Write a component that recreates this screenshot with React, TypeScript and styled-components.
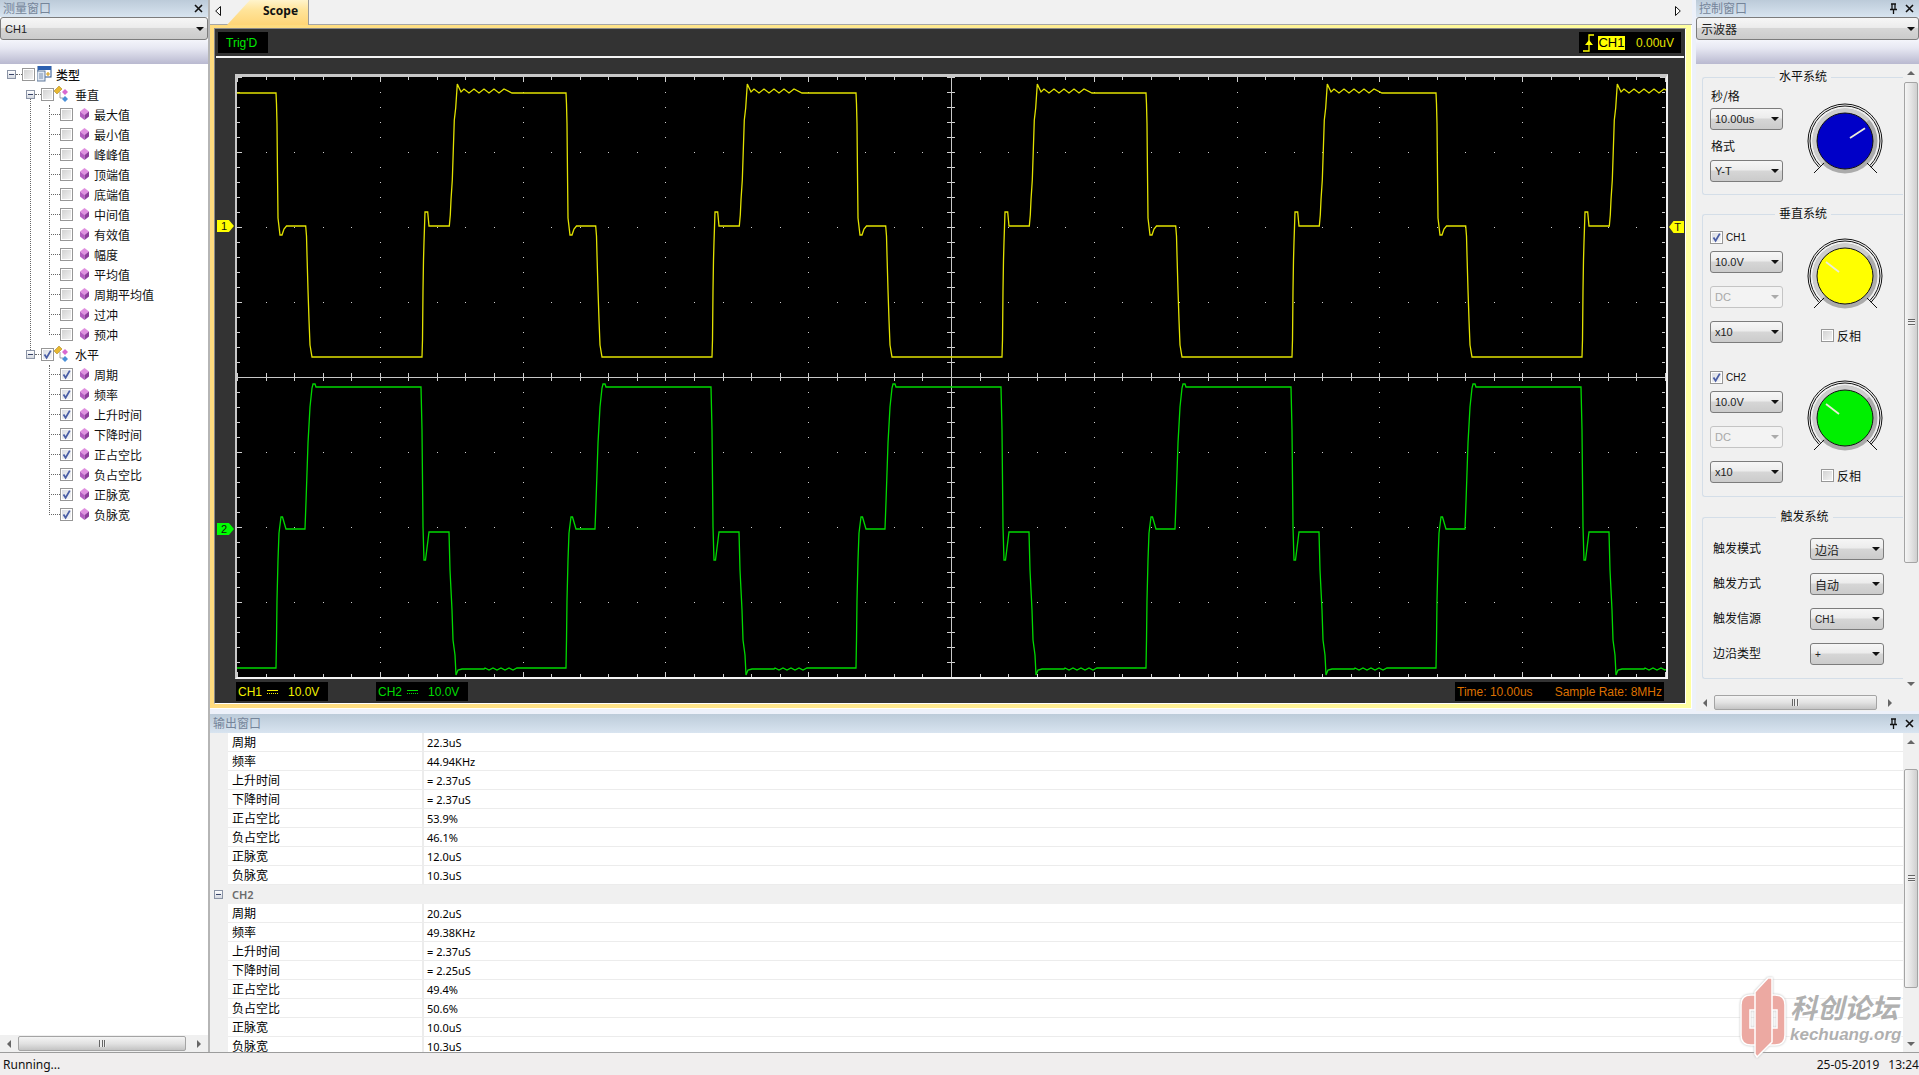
import styled, { createGlobalStyle } from 'styled-components'

const CJK = `'Noto Sans CJK SC', 'Noto Sans', sans-serif`
const LATIN = `'Liberation Sans', Arial, sans-serif`
const UI = `'Noto Sans', 'Noto Sans CJK SC', sans-serif`

const GlobalStyle = createGlobalStyle`
  html, body {
    margin: 0;
    padding: 0;
    background: #fff;
    overflow: hidden;
  }
  * {
    box-sizing: border-box;
  }
`

const Root = styled.div`
  position: relative;
  width: 1919px;
  height: 1075px;
  overflow: hidden;
  display: flex;
  flex-direction: column;
  font-family: ${CJK};
  font-size: 12px;
  color: #111;
`

const Main = styled.div`
  display: flex;
  height: 1052px;
`

/* docking pane parts */

const Pane = styled.div`
  width: 210px;
  display: flex;
  flex-direction: column;
  border-right: 2px solid #b5b5b5;
`

const TitleBar = styled.div`
  height: 17px;
  flex: none;
  display: flex;
  align-items: center;
  gap: 7px;
  padding: 0 5px 0 3px;
  background: linear-gradient(#bccbd9, #d8e4f0);
  color: #75859a;
  font-size: 12px;
`

const TitleText = styled.span`
  flex: 1;
  line-height: 15px;
  padding-bottom: 2px;
`

const ComboBar = styled.div`
  height: 23px;
  flex: none;
`

const Combo = styled.div<{ $w?: number; $h?: number; $disabled?: boolean; $size?: number; $cjk?: boolean }>`
  width: ${(p) => (p.$w ? `${p.$w}px` : '100%')};
  height: ${(p) => p.$h ?? 22}px;
  flex: none;
  display: flex;
  align-items: center;
  justify-content: space-between;
  padding: 0 3px 0 4px;
  border: 1px solid ${(p) => (p.$disabled ? '#c4c4c4' : '#7c7c7c')};
  border-radius: 3px;
  background: ${(p) =>
    p.$disabled
      ? '#f3f3f3'
      : 'linear-gradient(#f6f6f6 0%, #ececec 45%, #d6d6d6 50%, #cbcbcb 100%)'};
  color: ${(p) => (p.$disabled ? '#a8a8a8' : '#222')};
  font-family: ${(p) => (p.$cjk ? CJK : LATIN)};
  font-size: ${(p) => p.$size ?? 11}px;
`

const Caret = styled.i<{ $disabled?: boolean }>`
  width: 0;
  height: 0;
  border-left: 4px solid transparent;
  border-right: 4px solid transparent;
  border-top: 4px solid ${(p) => (p.$disabled ? '#aaa' : '#111')};
`

const ToolStrip = styled.div`
  height: 24px;
  flex: none;
  background: linear-gradient(#f4f5fb, #e6e7f2 35%, #b9b9d0);
`

const TreeArea = styled.div`
  position: relative;
  flex: 1;
  background: #fff;
`

const Row = styled.div<{ $level: number; $conn: number; $connW: number }>`
  position: relative;
  height: 20px;
  display: flex;
  align-items: center;
  padding-left: ${(p) => [7, 26, 60][p.$level]}px;
  &::before {
    content: '';
    position: absolute;
    left: ${(p) => p.$conn}px;
    width: ${(p) => p.$connW}px;
    top: 10px;
    border-top: 1px dotted #666;
  }
`

const Expand = styled.span`
  position: relative;
  width: 9px;
  height: 9px;
  margin-right: 6px;
  flex: none;
  border: 1px solid #8a93a5;
  background: linear-gradient(#fff, #d4d8e0);
  &::after {
    content: '';
    position: absolute;
    left: 1px;
    right: 1px;
    top: 3px;
    height: 1px;
    background: #39456a;
  }
`

const Check = styled.span<{ $on?: boolean }>`
  width: 13px;
  height: 13px;
  flex: none;
  display: flex;
  align-items: center;
  justify-content: center;
  border: 1px solid #979797;
  background: ${(p) =>
    p.$on ? 'linear-gradient(135deg, #d8dbe2, #f8f8f8)' : 'linear-gradient(135deg, #cfcfcf, #f6f6f6)'};
  box-shadow: inset 0 0 0 1px #fff;
`

const IconSlot = styled.span<{ $ml: number; $w: number }>`
  width: ${(p) => p.$w}px;
  height: 16px;
  margin-left: ${(p) => p.$ml}px;
  flex: none;
  display: flex;
  align-items: center;
  justify-content: center;
`

const Label = styled.span<{ $ml: number; $bold?: boolean }>`
  margin-left: ${(p) => p.$ml}px;
  font-weight: ${(p) => (p.$bold ? 500 : 400)};
  white-space: nowrap;
`

const Guide = styled.i<{ $left: number; $top: number; $h: number }>`
  position: absolute;
  left: ${(p) => p.$left}px;
  top: ${(p) => p.$top}px;
  height: ${(p) => p.$h}px;
  border-left: 1px dotted #666;
`

/* scrollbars */

const HBar = styled.div`
  height: 17px;
  flex: none;
  display: flex;
  align-items: center;
  background: #f0f0f0;
`

const BarEnd = styled.span<{ $w: number; $pl?: number }>`
  width: ${(p) => p.$w}px;
  height: 100%;
  flex: none;
  padding-left: ${(p) => p.$pl ?? 0}px;
  display: flex;
  align-items: center;
  justify-content: center;
`

const Thumb = styled.div<{ $vertical?: boolean }>`
  flex: 1;
  height: ${(p) => (p.$vertical ? 'auto' : '15px')};
  display: flex;
  align-items: center;
  justify-content: center;
  border: 1px solid #a4a4a4;
  border-radius: 2px;
  background: ${(p) =>
    p.$vertical
      ? 'linear-gradient(90deg, #f5f5f5, #e4e4e4 50%, #cfcfcf)'
      : 'linear-gradient(#f4f4f4, #e2e2e2 50%, #c4c4c4)'};
`

const Grip = styled.i<{ $vertical?: boolean }>`
  width: 7px;
  height: 7px;
  background: ${(p) =>
    p.$vertical
      ? 'repeating-linear-gradient(#666 0 1px, #eee 1px 2.5px)'
      : 'repeating-linear-gradient(90deg, #666 0 1px, #eee 1px 2.5px)'};
`

const Tri = styled.i<{ $dir: 'left' | 'right' | 'up' | 'down' }>`
  width: 0;
  height: 0;
  ${(p) =>
    p.$dir === 'left' || p.$dir === 'right'
      ? `border-top: 4px solid transparent; border-bottom: 4px solid transparent;
         border-${p.$dir === 'left' ? 'right' : 'left'}: 4px solid #666;`
      : `border-left: 4px solid transparent; border-right: 4px solid transparent;
         border-${p.$dir === 'up' ? 'bottom' : 'top'}: 4px solid #666;`}
`

const VBar = styled.div`
  width: 16px;
  flex: none;
  display: flex;
  flex-direction: column;
  background: #f0f0f0;
`

const VEnd = styled.span<{ $h: number }>`
  height: ${(p) => p.$h}px;
  flex: none;
  display: flex;
  align-items: center;
  justify-content: center;
`

const VThumb = styled(Thumb)<{ $h: number }>`
  flex: none;
  height: ${(p) => p.$h}px;
  margin: 0 1px;
`

const VSpace = styled.span`
  flex: 1;
`

/* center column */

const Work = styled.div`
  flex: 1;
  display: flex;
  flex-direction: column;
  min-width: 0;
`

const TopRow = styled.div`
  height: 714px;
  flex: none;
  display: flex;
  background: #edf1fa;
`

const DocArea = styled.div`
  width: 1482px;
  flex: none;
`

const TabStrip = styled.div`
  height: 25px;
  display: flex;
  align-items: flex-start;
  padding: 0 11px 0 5px;
  background: #f1f1f1;
  border-bottom: 1px solid #a6a6a6;
`

const TabArrow = styled.svg`
  width: 6px;
  height: 10px;
  margin-top: 6px;
  flex: none;
`

const Tab = styled.div`
  width: 82px;
  height: 25px;
  margin-left: 6px;
  padding-left: 36px;
  margin-right: auto;
  clip-path: polygon(0 100%, 23px 0, 100% 0, 100% 100%);
  background: linear-gradient(#fff4cc, #ffe49a 40%, #ffd577);
  border-right: 1px solid #9a9a9a;
  font-family: ${UI};
  font-weight: 700;
  font-size: 12px;
  line-height: 22px;
`

const Frame = styled.div`
  height: 684px;
  padding: 3px 5px 5px 4px;
  background: linear-gradient(90deg, #ffdb7e, #ffea90 50%, #ffff9f);
  border-right: 1px solid #fff;
  border-bottom: 1px solid #fff;
`

const Scopeboard = styled.div`
  position: relative;
  height: 676px;
  background: #333;
  border: 1px solid;
  border-color: #8a8a8a #fff #fff #8a8a8a;
  font-family: ${LATIN};
  font-size: 12px;
`

const Header = styled.div`
  height: 21px;
  margin-top: 3px;
  padding: 0 4px 0 3px;
  display: flex;
  justify-content: space-between;
`

const Readout = styled.div<{ $w: number; $color?: string }>`
  width: ${(p) => p.$w}px;
  height: 100%;
  display: flex;
  align-items: center;
  background: #000;
  color: ${(p) => p.$color ?? '#00e800'};
  white-space: nowrap;
`

const TrigText = styled.span`
  padding-left: 8px;
`

const TrigSymbol = styled.svg`
  width: 12px;
  height: 19px;
  margin-left: 3px;
  flex: none;
`

const ChTag = styled.span`
  width: 27px;
  height: 14px;
  margin-left: 4px;
  background: #ffff00;
  color: #000;
  font-size: 13px;
  line-height: 14px;
  text-align: center;
`

const ChLevel = styled.span`
  margin-left: 11px;
  color: #e4e400;
`

const WhiteRule = styled.div`
  height: 2px;
  margin: 3px 1px 0;
  background: #f4f4f4;
`

const Screen = styled.div`
  width: 1433px;
  height: 605px;
  margin: 16px 0 0 20px;
  border: solid #e8e8e8;
  border-width: 3px 2px 2px 2px;
  border-color: #c8c8c8 #f0f0f0 #f4f4f4 #c8c8c8;
  background: #000;
`

const ScopeSvg = styled.svg`
  display: block;
  width: 100%;
  height: 100%;
`

const Footer = styled.div`
  height: 19px;
  margin: 3px 21px 0;
  display: flex;
  gap: 48px;
`

const FooterText = styled.span<{ $ml?: number }>`
  margin-left: ${(p) => p.$ml ?? 2}px;
`

const DcMark = styled.i`
  width: 11px;
  height: 4px;
  margin-left: 5px;
  border-top: 1px solid currentColor;
  border-bottom: 1px dotted currentColor;
  flex: none;
`

const RateBox = styled(Readout)`
  margin-left: auto;
  justify-content: space-between;
  padding: 0 2px;
`

const Marker = styled.div<{ $top: number; $side: 'left' | 'right'; $color: string }>`
  position: absolute;
  top: ${(p) => p.$top}px;
  ${(p) => (p.$side === 'left' ? 'left: 2px;' : 'right: 1px;')}
  width: ${(p) => (p.$side === 'left' ? 17 : 15)}px;
  height: 12px;
  background: ${(p) => p.$color};
  clip-path: ${(p) =>
    p.$side === 'left'
      ? 'polygon(0 0, 70% 0, 100% 50%, 70% 100%, 0 100%)'
      : 'polygon(30% 0, 100% 0, 100% 100%, 30% 100%, 0 50%)'};
  color: #111;
  font-size: 11px;
  line-height: 12px;
  text-align: ${(p) => (p.$side === 'left' ? 'left' : 'right')};
  padding: 0 3px 0 4px;
`

/* control pane */

const ControlPane = styled.div`
  width: 223px;
  margin-left: 4px;
  flex: none;
  display: flex;
  flex-direction: column;
`

const ControlBody = styled.div`
  height: 630px;
  flex: none;
  display: flex;
  background: #f0f0f0;
`

const ControlContent = styled.div`
  width: 207px;
  flex: none;
  padding-left: 6px;
`

const Group = styled.fieldset<{ $mt: number; $h: number; $pl?: number }>`
  margin: ${(p) => p.$mt}px 0 0;
  padding: 0 7px 0 ${(p) => p.$pl ?? 7}px;
  height: ${(p) => p.$h}px;
  border: 1px solid #d4dee8;
  border-right: none;
  border-radius: 3px 0 0 3px;
  min-width: 0;
`

const Legend = styled.legend`
  margin: 0 auto;
  padding: 0 4px 2px;
  font-size: 12px;
  line-height: 14px;
`

const GroupRow = styled.div`
  display: flex;
`

const LeftCol = styled.div`
  width: 73px;
  flex: none;
  display: flex;
  flex-direction: column;
`

const RightCol = styled.div`
  margin-left: 20px;
  display: flex;
  flex-direction: column;
`

const FieldLabel = styled.div<{ $mt: number; $mb: number }>`
  height: 16px;
  line-height: 16px;
  margin: ${(p) => p.$mt}px 0 ${(p) => p.$mb}px 1px;
`

const KnobSvg = styled.svg<{ $mt: number }>`
  width: 84px;
  height: 84px;
  margin-top: ${(p) => p.$mt}px;
  display: block;
  flex: none;
`

const Channel = styled.div<{ $mt: number }>`
  display: flex;
  margin-top: ${(p) => p.$mt}px;
`

const ChannelCheck = styled.div`
  height: 14px;
  display: flex;
  align-items: center;
  gap: 3px;
  font-family: ${LATIN};
  font-size: 10px;
`

const ComboStack = styled.div`
  margin-top: 7px;
  display: flex;
  flex-direction: column;
  gap: 13px;
`

const InvertRow = styled.div<{ $mt: number }>`
  height: 16px;
  margin: ${(p) => p.$mt}px 0 0 18px;
  display: flex;
  align-items: center;
  gap: 3px;
`

const TriggerGrid = styled.div`
  margin-top: 13px;
  display: grid;
  grid-template-columns: 97px 74px;
  row-gap: 13px;
  align-items: center;
`

const TriggerLabel = styled.span`
  line-height: 14px;
  padding-bottom: 2px;
`

/* output pane */

const OutputPane = styled.div`
  flex: 1;
  min-height: 0;
  display: flex;
  flex-direction: column;
`

const OutputTitle = styled(TitleBar)`
  height: 19px;
  flex: none;
  padding-right: 5px;
`

const OutputBody = styled.div`
  flex: 1;
  min-height: 0;
  display: flex;
  overflow: hidden;
`

const OutputList = styled.div`
  flex: 1;
  min-width: 0;
  overflow: hidden;
  font-family: ${UI};
  font-size: 11px;
  color: #000;
`

const OutRow = styled.div`
  height: 19px;
  display: grid;
  grid-template-columns: 18px 194px 1fr;
  border-bottom: 1px solid #ececec;
`

const Gutter = styled.span`
  background: #f0f0f0;
`

const NameCell = styled.span`
  padding-left: 4px;
  font-family: ${CJK};
  font-size: 12px;
  line-height: 18px;
`

const ValueCell = styled.span`
  padding-left: 3px;
  border-left: 2px solid #ececec;
  line-height: 19px;
`

const GroupOutRow = styled.div`
  height: 19px;
  display: flex;
  align-items: center;
  padding-left: 4px;
  background: #f0f0f0;
  color: #6a6a6a;
  font-family: ${UI};
  font-weight: 600;
  font-size: 11px;
  gap: 9px;
`

const SmallExpand = styled(Expand)`
  margin: 0;
`

/* status bar and overlay */

const StatusBar = styled.div`
  height: 23px;
  flex: none;
  display: flex;
  align-items: center;
  justify-content: space-between;
  padding: 0 0 0 3px;
  background: #f0eeee;
  border-top: 1px solid #9c9c9c;
  font-family: ${UI};
  font-size: 12px;
`

const StatusTime = styled.span`
  display: flex;
  gap: 9px;
  white-space: nowrap;
`

const Watermark = styled.div`
  position: absolute;
  left: 1740px;
  top: 976px;
  display: flex;
  pointer-events: none;
`

const WatermarkLogo = styled.svg`
  width: 46px;
  height: 83px;
  flex: none;
  filter: drop-shadow(0 0 1px #bbb);
`

const WatermarkText = styled.div`
  margin: 16px 0 0 4px;
  display: flex;
  flex-direction: column;
  color: #b0b0b0;
  text-shadow: 0 0 2px #fff, 0 0 2px #fff, 1px 1px 1px #fff, -1px -1px 1px #fff;
`

const WatermarkCn = styled.span`
  font-family: ${CJK};
  font-style: italic;
  font-weight: 700;
  font-size: 27px;
  line-height: 30px;
  white-space: nowrap;
`

const WatermarkEn = styled.span`
  margin-top: 2px;
  font-family: ${LATIN};
  font-style: italic;
  font-weight: 700;
  font-size: 17px;
  line-height: 22px;
  white-space: nowrap;
`

/* icons */

const CheckMark = () => (
  <svg width="11" height="11" viewBox="0 0 11 11">
    <path d="M2.5 5.5 L4.6 8.8 L8.8 1.6" fill="none" stroke="#4a5ea6" strokeWidth="1.8" />
  </svg>
)

const Box = ({ on }: { on?: boolean }) => <Check $on={on}>{on && <CheckMark />}</Check>

const Pin = () => (
  <svg width="9" height="11" viewBox="0 0 9 11">
    <path d="M2 1H7M3 1V6M6 1V6M1 6.5H8M4.5 6.5V11" fill="none" stroke="#111" strokeWidth="1.3" />
  </svg>
)

const CloseX = () => (
  <svg width="9" height="9" viewBox="0 0 9 9">
    <path d="M1 1L8 8M8 1L1 8" fill="none" stroke="#111" strokeWidth="1.6" />
  </svg>
)

const Diamond = () => (
  <svg width="9" height="12" viewBox="0 0 9 12">
    <polygon points="4.5,0 9,3.5 4.5,7 0,3.5" fill="#e090e0" />
    <polygon points="0,3.5 4.5,7 4.5,12 0,8.5" fill="#b45cc0" />
    <polygon points="9,3.5 4.5,7 4.5,12 9,8.5" fill="#8e3c9c" />
  </svg>
)

const GroupIcon = () => (
  <svg width="15" height="16" viewBox="0 0 15 16">
    <polygon points="0,5 5,0 8,3 3,8" fill="#e8b830" stroke="#a07a10" strokeWidth="0.5" />
    <path d="M6 6V12H9" fill="none" stroke="#888" strokeWidth="0.8" />
    <polygon points="11,3 14,6 11,9 8,6" fill="#d868d0" />
    <polygon points="11,10 14,13 11,16 8,13" fill="#4a90d8" />
  </svg>
)

const RootIcon = () => (
  <svg width="15" height="16" viewBox="0 0 15 16">
    <rect x="1" y="0" width="13" height="11" fill="#fff" stroke="#28508c" strokeWidth="1" />
    <rect x="1" y="0" width="13" height="4" fill="#2c60b0" />
    <rect x="0" y="5" width="8" height="10" fill="#dfe8f4" stroke="#607a9c" strokeWidth="1" />
    <path d="M2 8H6M2 10H6M2 12H6" stroke="#607a9c" strokeWidth="0.8" />
    <path d="M11 6V10M9 8H13" stroke="#d8a020" strokeWidth="1.2" />
  </svg>
)

/* scope drawing, real screen coordinates so the numbers stay readable */

const X0 = 237
const Y0 = 77
const CX = 951
const CY = 377
const STEP_X = 28.56
const STEP_Y = 15

const buildGrid = () => {
  const ticks: string[] = []
  const dots: string[] = []
  for (let i = 0; i <= 50; i++) {
    const x = Math.round(X0 + i * STEP_X)
    const len = i % 5 === 0 ? 5 : 3
    ticks.push(`M${x} ${Y0}v${len}M${x} ${Y0 + 600}v${-len}`)
    ticks.push(`M${x} ${CY - 4}v8`)
    if (i % 5 !== 0) {
      for (let j = 1; j < 8; j++) dots.push(`M${x} ${Y0 + j * 75}h1v1h-1z`)
    }
  }
  for (let i = 0; i <= 40; i++) {
    const y = Y0 + i * STEP_Y
    const len = i % 5 === 0 ? 5 : 3
    ticks.push(`M${X0} ${y}h${len}M${X0 + 1428} ${y}h${-len}`)
    ticks.push(`M${CX - 4} ${y}h8`)
    if (i % 5 !== 0) {
      for (let j = 1; j < 10; j++) {
        dots.push(`M${Math.round(X0 + j * 142.8)} ${y}h1v1h-1z`)
      }
    }
  }
  return { ticks: ticks.join(''), dots: dots.join('') }
}

const GRID = buildGrid()

const wobble = (from: number, to: number, step: number, a: number, b: number) => {
  const pts: number[][] = []
  let up = true
  for (let x = from; x < to; x += step) {
    pts.push([x, up ? a : b])
    up = !up
  }
  return pts
}

// one period of each trace, x measured from the falling edge of ch1
const YELLOW_PERIOD = [
  [0, 93], [0.5, 104], [1, 124], [1.5, 174], [2, 218], [4, 235], [6, 235], [8, 229], [10.5, 226],
  [29.7, 226], [30.5, 236], [31, 255], [32, 290], [33, 320], [34, 345], [36, 357],
  [146, 357], [146.5, 340], [147, 290], [147.5, 260], [148, 242], [149, 212], [151.7, 212], [153, 226],
  [173.3, 226], [174.3, 215], [175, 200], [176.3, 180], [177.3, 150], [178.3, 120], [179.7, 108], [181.3, 84],
  [185, 92],
  ...wobble(188, 232, 5, 89, 93),
  [236, 93], [290, 93],
]

const GREEN_PERIOD = [
  [0, 668], [0.5, 640], [1, 600], [2, 560], [3, 533], [5, 517], [6.5, 517], [10, 529],
  [29, 529], [30, 502], [32, 443], [34, 407], [36, 388], [37, 384], [39, 384], [40, 387],
  [145, 387], [146, 430], [147, 527], [148, 560], [149.5, 560], [153, 532],
  [173, 532], [174, 570], [176, 610], [177, 640], [179, 655], [180, 675], [182, 670], [186, 669], [208, 669],
  ...wobble(209, 245, 4, 668, 670),
  [250, 668], [290, 668],
]

const traceFor = (period: number[][]) => {
  const pts: string[] = []
  for (let k = -1; k < 5; k++) {
    for (const [dx, y] of period) pts.push(`${276 + k * 290 + dx},${y}`)
  }
  return pts.join(' ')
}

const YELLOW_TRACE = traceFor(YELLOW_PERIOD)
const GREEN_TRACE = traceFor(GREEN_PERIOD)

const ScopeDrawing = () => (
  <ScopeSvg viewBox={`${X0} ${Y0} 1429 600`} preserveAspectRatio="none">
    <g shapeRendering="crispEdges">
      <path d={GRID.dots} fill="#cccccc" />
      <path d={GRID.ticks} stroke="#cfcfcf" strokeWidth="1" fill="none" />
      <path d={`M${X0} ${CY}H${X0 + 1429}M${CX} ${Y0}V${Y0 + 600}`} stroke="#c8c8c8" strokeWidth="1" />
    </g>
    <polyline points={YELLOW_TRACE} fill="none" stroke="#e2e200" strokeWidth="1.3" />
    <polyline points={GREEN_TRACE} fill="none" stroke="#00d800" strokeWidth="1.3" />
  </ScopeSvg>
)

const Knob = ({ color, line, mt }: { color: string; line: number[]; mt: number }) => {
  const c = 42
  const ringEnd = (r: number) => r * Math.SQRT1_2
  const ring = (r: number) =>
    `M${c - ringEnd(r)} ${c + ringEnd(r)}A${r} ${r} 0 1 1 ${c + ringEnd(r)} ${c + ringEnd(r)}`
  const bandR = 30.2
  const endX = c + bandR * Math.cos(-0.72)
  const endY = c + bandR * Math.sin(-0.72)
  return (
    <KnobSvg viewBox="0 0 84 84" $mt={mt}>
      <path d={ring(37)} fill="none" stroke="#111" strokeWidth="1" />
      <path d={ring(35)} fill="none" stroke="#111" strokeWidth="1" />
      <circle cx={c} cy={c} r="32.5" fill="#ababab" />
      <path
        d={`M${c - bandR * Math.SQRT1_2} ${c + bandR * Math.SQRT1_2}A${bandR} ${bandR} 0 1 1 ${endX} ${endY}`}
        fill="none"
        stroke="#cdcdcd"
        strokeWidth="4.6"
      />
      <path d={`M${c - 31} ${c + 32}L${c - 21} ${c + 22}M${c + 32} ${c + 32}L${c + 22} ${c + 22}`} stroke="#111" strokeWidth="1" />
      <circle cx={c} cy={c} r="28" fill={color} stroke="#111" strokeWidth="1" />
      <line
        x1={c + line[0]}
        y1={c + line[1]}
        x2={c + line[2]}
        y2={c + line[3]}
        stroke="#ececd8"
        strokeWidth="1.8"
      />
    </KnobSvg>
  )
}

const PointerBlue = [5, -3, 20, -12.7]
const PointerLeft = [-19, -14, -6, -4]

const VERTICAL = ['最大值', '最小值', '峰峰值', '顶端值', '底端值', '中间值', '有效值', '幅度', '平均值', '周期平均值', '过冲', '预冲']
const HORIZONTAL = ['周期', '频率', '上升时间', '下降时间', '正占空比', '负占空比', '正脉宽', '负脉宽']

const CH1_VALUES = ['22.3uS', '44.94KHz', '= 2.37uS', '= 2.37uS', '53.9%', '46.1%', '12.0uS', '10.3uS']
const CH2_VALUES = ['20.2uS', '49.38KHz', '= 2.37uS', '= 2.25uS', '49.4%', '50.6%', '10.0uS', '10.3uS']

const LeafRow = ({ text, on }: { text: string; on?: boolean }) => (
  <Row $level={2} $conn={49} $connW={11}>
    <Box on={on} />
    <IconSlot $ml={7} $w={9}>
      <Diamond />
    </IconSlot>
    <Label $ml={5}>{text}</Label>
  </Row>
)

const BranchRow = ({ text, on }: { text: string; on?: boolean }) => (
  <Row $level={1} $conn={35} $connW={6}>
    <Expand />
    <Box on={on} />
    <IconSlot $ml={0} $w={15}>
      <GroupIcon />
    </IconSlot>
    <Label $ml={6}>{text}</Label>
  </Row>
)

const OutputRows = ({ values }: { values: string[] }) => (
  <>
    {HORIZONTAL.map((name, i) => (
      <OutRow key={name}>
        <Gutter />
        <NameCell>{name}</NameCell>
        <ValueCell>{values[i]}</ValueCell>
      </OutRow>
    ))}
  </>
)

const ChannelBlock = ({
  name,
  color,
  mt,
  knobMt,
  invertMt,
}: {
  name: string
  color: string
  mt: number
  knobMt: number
  invertMt: number
}) => (
  <Channel $mt={mt}>
    <LeftCol>
      <ChannelCheck>
        <Box on />
        {name}
      </ChannelCheck>
      <ComboStack>
        <Combo>
          10.0V
          <Caret />
        </Combo>
        <Combo $disabled>
          DC
          <Caret $disabled />
        </Combo>
        <Combo>
          x10
          <Caret />
        </Combo>
      </ComboStack>
    </LeftCol>
    <RightCol>
      <Knob color={color} line={PointerLeft} mt={knobMt} />
      <InvertRow $mt={invertMt}>
        <Box />
        反相
      </InvertRow>
    </RightCol>
  </Channel>
)

const TriggerRow = ({ label, value, cjk }: { label: string; value: string; cjk?: boolean }) => (
  <>
    <TriggerLabel>{label}</TriggerLabel>
    <Combo $cjk={cjk} $size={cjk ? 12 : 10}>
      {value}
      <Caret />
    </Combo>
  </>
)

export default function App() {
  return (
    <Root>
      <GlobalStyle />
      <Main>
        <Pane>
          <TitleBar>
            <TitleText>测量窗口</TitleText>
            <CloseX />
          </TitleBar>
          <ComboBar>
            <Combo $h={23} $size={11}>
              CH1
              <Caret />
            </Combo>
          </ComboBar>
          <ToolStrip />
          <TreeArea>
            <Guide $left={30} $top={35} $h={251} />
            <Guide $left={49} $top={41} $h={230} />
            <Guide $left={49} $top={301} $h={150} />
            <Row $level={0} $conn={16} $connW={6}>
              <Expand />
              <Box />
              <IconSlot $ml={2} $w={15}>
                <RootIcon />
              </IconSlot>
              <Label $ml={4} $bold>
                类型
              </Label>
            </Row>
            <BranchRow text="垂直" />
            {VERTICAL.map((t) => (
              <LeafRow key={t} text={t} />
            ))}
            <BranchRow text="水平" on />
            {HORIZONTAL.map((t) => (
              <LeafRow key={t} text={t} on />
            ))}
          </TreeArea>
          <HBar>
            <BarEnd $w={18}>
              <Tri $dir="left" />
            </BarEnd>
            <Thumb>
              <Grip />
            </Thumb>
            <BarEnd $w={22} $pl={4}>
              <Tri $dir="right" />
            </BarEnd>
          </HBar>
        </Pane>

        <Work>
          <TopRow>
            <DocArea>
              <TabStrip>
                <TabArrow viewBox="0 0 6 10">
                  <path d="M5.5 0.5V9.5L0.7 5Z" fill="#fff" stroke="#111" strokeWidth="1" />
                </TabArrow>
                <Tab>Scope</Tab>
                <TabArrow viewBox="0 0 6 10">
                  <path d="M0.5 0.5V9.5L5.3 5Z" fill="#fff" stroke="#111" strokeWidth="1" />
                </TabArrow>
              </TabStrip>
              <Frame>
                <Scopeboard>
                  <Header>
                    <Readout $w={50}>
                      <TrigText>Trig'D</TrigText>
                    </Readout>
                    <Readout $w={102} $color="#ffff00">
                      <TrigSymbol viewBox="0 0 12 19">
                        <path d="M1 18H7V2H12" fill="none" stroke="#ffff00" strokeWidth="1.3" />
                        <polygon points="7,7 11,12 3,12" fill="#ffff00" />
                      </TrigSymbol>
                      <ChTag>CH1</ChTag>
                      <ChLevel>0.00uV</ChLevel>
                    </Readout>
                  </Header>
                  <WhiteRule />
                  <Screen>
                    <ScopeDrawing />
                  </Screen>
                  <Footer>
                    <Readout $w={92} $color="#f0f000">
                      <FooterText>CH1</FooterText>
                      <DcMark />
                      <FooterText $ml={10}>10.0V</FooterText>
                    </Readout>
                    <Readout $w={92} $color="#00dc00">
                      <FooterText>CH2</FooterText>
                      <DcMark />
                      <FooterText $ml={10}>10.0V</FooterText>
                    </Readout>
                    <RateBox $w={209} $color="#dc7000">
                      <span>Time: 10.00us</span>
                      <span>Sample Rate: 8MHz</span>
                    </RateBox>
                  </Footer>
                  <Marker $top={191} $side="left" $color="#ffff00">
                    1
                  </Marker>
                  <Marker $top={494} $side="left" $color="#00ff00">
                    2
                  </Marker>
                  <Marker $top={192} $side="right" $color="#ffff00">
                    T
                  </Marker>
                </Scopeboard>
              </Frame>
            </DocArea>

            <ControlPane>
              <TitleBar>
                <TitleText>控制窗口</TitleText>
                <Pin />
                <CloseX />
              </TitleBar>
              <ComboBar>
                <Combo $h={23} $cjk $size={12}>
                  示波器
                  <Caret />
                </Combo>
              </ComboBar>
              <ToolStrip />
              <ControlBody>
                <ControlContent>
                  <Group $mt={5} $h={126}>
                    <Legend>水平系统</Legend>
                    <GroupRow>
                      <LeftCol>
                        <FieldLabel $mt={3} $mb={4}>
                          秒/格
                        </FieldLabel>
                        <Combo>
                          10.00us
                          <Caret />
                        </Combo>
                        <FieldLabel $mt={8} $mb={6}>
                          格式
                        </FieldLabel>
                        <Combo>
                          Y-T
                          <Caret />
                        </Combo>
                      </LeftCol>
                      <RightCol>
                        <Knob color="#0000c8" line={PointerBlue} mt={14} />
                      </RightCol>
                    </GroupRow>
                  </Group>
                  <Group $mt={11} $h={291}>
                    <Legend>垂直系统</Legend>
                    <ChannelBlock name="CH1" color="#ffff00" mt={8} knobMt={4} invertMt={9} />
                    <ChannelBlock name="CH2" color="#00f000" mt={27} knobMt={6} invertMt={7} />
                  </Group>
                  <Group $mt={12} $h={170} $pl={10}>
                    <Legend>触发系统</Legend>
                    <TriggerGrid>
                      <TriggerRow label="触发模式" value="边沿" cjk />
                      <TriggerRow label="触发方式" value="自动" cjk />
                      <TriggerRow label="触发信源" value="CH1" />
                      <TriggerRow label="边沿类型" value="+" />
                    </TriggerGrid>
                  </Group>
                </ControlContent>
                <VBar>
                  <VEnd $h={18}>
                    <Tri $dir="up" />
                  </VEnd>
                  <VThumb $vertical $h={481}>
                    <Grip $vertical />
                  </VThumb>
                  <VSpace />
                  <VEnd $h={20}>
                    <Tri $dir="down" />
                  </VEnd>
                </VBar>
              </ControlBody>
              <HBar>
                <BarEnd $w={18}>
                  <Tri $dir="left" />
                </BarEnd>
                <Thumb>
                  <Grip />
                </Thumb>
                <BarEnd $w={26}>
                  <Tri $dir="right" />
                </BarEnd>
                <BarEnd $w={16} />
              </HBar>
            </ControlPane>
          </TopRow>

          <OutputPane>
            <OutputTitle>
              <TitleText>输出窗口</TitleText>
              <Pin />
              <CloseX />
            </OutputTitle>
            <OutputBody>
              <OutputList>
                <OutputRows values={CH1_VALUES} />
                <GroupOutRow>
                  <SmallExpand />
                  CH2
                </GroupOutRow>
                <OutputRows values={CH2_VALUES} />
              </OutputList>
              <VBar>
                <VEnd $h={18}>
                  <Tri $dir="up" />
                </VEnd>
                <VEnd $h={18} />
                <VThumb $vertical $h={219}>
                  <Grip $vertical />
                </VThumb>
                <VSpace />
                <VEnd $h={16}>
                  <Tri $dir="down" />
                </VEnd>
              </VBar>
            </OutputBody>
          </OutputPane>
        </Work>
      </Main>

      <StatusBar>
        <span>Running...</span>
        <StatusTime>
          <span>25-05-2019</span>
          <span>13:24</span>
        </StatusTime>
      </StatusBar>

      <Watermark>
        <WatermarkLogo viewBox="0 0 46 83">
          <path
            fillRule="evenodd"
            d="M11 19H35Q45 19 45 29V59Q45 69 35 69H11Q1 69 1 59V29Q1 19 11 19ZM10 34V52H17V34ZM32 34V52H37V34Z"
            fill="#eca9a2"
            stroke="#fff"
            strokeWidth="1.5"
          />
          <path d="M15 16L28 2H32V66L17 81L15 78Z" fill="#eca9a2" stroke="#fff" strokeWidth="1.5" />
        </WatermarkLogo>
        <WatermarkText>
          <WatermarkCn>科创论坛</WatermarkCn>
          <WatermarkEn>kechuang.org</WatermarkEn>
        </WatermarkText>
      </Watermark>
    </Root>
  )
}
